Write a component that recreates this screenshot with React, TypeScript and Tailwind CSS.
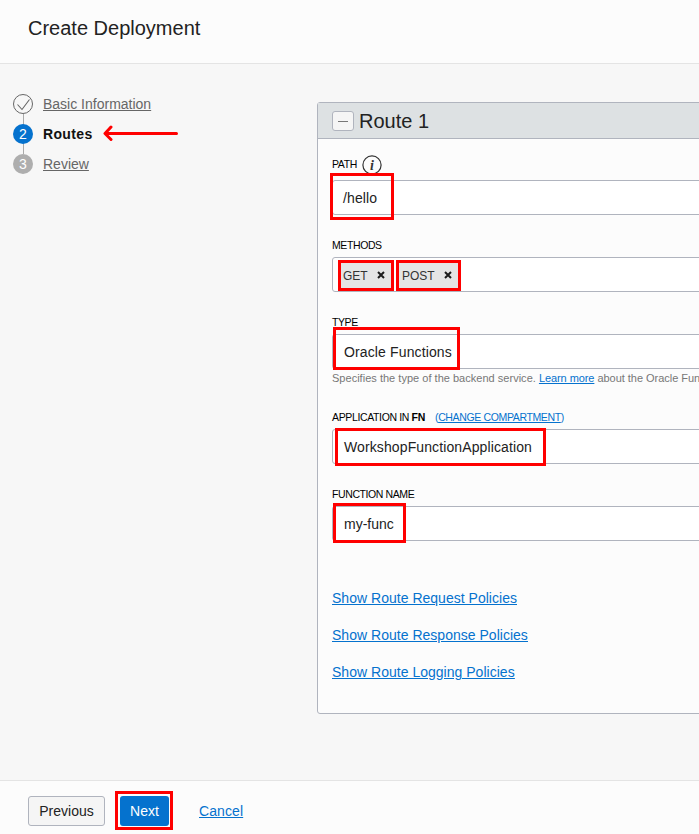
import React from "react";

function Highlight({ className }: { className: string }) {
  return <div className={`pointer-events-none absolute z-10 border-[3px] border-[#ff0000] ${className}`} />;
}

function Label({ children, className = "tracking-[-0.4px]" }: { children: React.ReactNode; className?: string }) {
  return <div className={`flex h-5 items-center whitespace-pre text-[10.5px] leading-5 text-black ${className}`}>{children}</div>;
}

function Field({ children, className = "" }: { children?: React.ReactNode; className?: string }) {
  return (
    <div className={`relative flex h-[35px] w-[500px] items-center rounded-[3px] border border-[#b0b4be] bg-white pt-[2px] text-[14px] text-[#222] ${className}`}>
      {children}
    </div>
  );
}

function Tag({ children, className }: { children: string; className: string }) {
  return (
    <div className={`relative flex h-[31px] items-center justify-between bg-[#e5e5e5] pr-[9px] text-[12px] text-[#333] ${className}`}>
      <span>{children}</span>
      <svg width="8" height="8" viewBox="0 0 8 8" className="relative -top-px text-[#1c1c1c]">
        <path d="M1 1l6 6M7 1L1 7" stroke="currentColor" strokeWidth="2" />
      </svg>
      <Highlight className="inset-0" />
    </div>
  );
}

export default function App() {
  return (
    <div className="flex h-[834px] w-[699px] flex-col overflow-hidden bg-[#f7f7f7] font-['Liberation_Sans',Arial,sans-serif]">
      <header className="h-16 shrink-0 border-b border-[#e4e4e4] bg-[#fcfcfc] pl-7 pt-[14px]">
        <h1 className="text-[20px] leading-7 text-[#222]">Create Deployment</h1>
      </header>

      <main className="flex h-[716px] shrink-0">
        <nav className="w-[317px] shrink-0 pl-[13px] pt-[25px] text-[14px] text-[#666]">
          <div className="flex h-[30px] items-center gap-[10px]">
            <svg width="20" height="20" viewBox="0 0 20 20" fill="none" stroke="#666" className="shrink-0">
              <circle cx="10" cy="10" r="9.5" />
              <path d="M4.500 10.500l4.500 5L16.500 5.500" strokeWidth="1.1" />
            </svg>
            <a className="underline">Basic Information</a>
          </div>
          <div className="relative flex h-[30px] items-center gap-[10px]">
            <span className="absolute left-[10px] top-[-5px] h-10 w-px bg-[#aaa]" />
            <span className="relative flex size-5 items-center justify-center rounded-full bg-[#0572ce] text-white">2</span>
            <span className="w-[50px] font-bold tracking-[0.35px] text-[#111]">Routes</span>
            <svg width="76" height="18" viewBox="0 0 76 18" fill="none" stroke="#ff0000" strokeWidth="3" strokeLinecap="round" strokeLinejoin="round">
              <path d="M2.500 8.500H73.500M8 2L2 8.500l6 6" />
            </svg>
          </div>
          <div className="flex h-[30px] items-center gap-[10px]">
            <span className="relative flex size-5 items-center justify-center rounded-full bg-[#aeaeae] text-white">3</span>
            <a className="underline">Review</a>
          </div>
        </nav>

        <section className="mt-[38px] h-[612px] w-[530px] shrink-0 rounded-[3px] border border-[#b0b4be] bg-[#fcfcfc]">
          <div className="flex h-9 items-center gap-[5px] border-b border-[#b0b4be] bg-[#dde1e3] pl-[14px]">
            <span className="flex h-5 w-[22px] items-center justify-center rounded-[3px] border border-[#b0b4be] bg-[#f5f5f5]">
              <span className="mt-px h-px w-[10px] bg-[#777]" />
            </span>
            <h2 className="text-[20px] leading-7 text-[#222]">Route 1</h2>
          </div>

          <div className="pl-[14px] pt-[15px]">
            <Label>
              <span className="w-[30px]">PATH</span>
              <svg width="20" height="20" viewBox="0 0 20 20" className="relative top-px">
                <circle cx="10" cy="10" r="9.100" fill="none" stroke="#333" strokeWidth="1.2" />
                <text x="10" y="14.500" textAnchor="middle" fill="#333" className="font-['Liberation_Serif',serif] text-[14px] font-bold italic tracking-normal">i</text>
              </svg>
            </Label>
            <Field className="mt-[6px] pl-[10px] tracking-[0.1px]">
              /hello
              <Highlight className="left-[-3px] top-[-8px] h-[47px] w-16" />
            </Field>

            <div className="mt-5">
              <Label>METHODS</Label>
              <Field className="mt-[2px] gap-[2px] pl-[5px]">
                <Tag className="w-14 pl-[5px]">GET</Tag>
                <Tag className="w-[65px] pl-[6px]">POST</Tag>
              </Field>
            </div>

            <div className="mt-5">
              <Label>TYPE</Label>
              <Field className="mt-[2px] pl-[11px] tracking-[0.13px]">
                Oracle Functions
                <Highlight className="left-0 top-[-8px] h-[43px] w-[127px]" />
              </Field>
              <p className="h-[18px] whitespace-nowrap text-[11px] leading-[18px] text-[#777]">
                <span className="tracking-[0.02px]">Specifies the type of the backend service. </span>
                <a className="tracking-[-0.08px] text-[#0572ce] underline">Learn more</a>
                <span className="tracking-[-0.03px]"> about the Oracle Fun</span>
              </p>
            </div>

            <div className="mt-5">
              <Label className="tracking-[-0.36px]">
                <span className="w-[103px]">APPLICATION IN <b>FN</b></span>
                <span className="text-[#0572ce]">(<a className="underline">CHANGE COMPARTMENT</a>)</span>
              </Label>
              <Field className="mt-[2px] pl-[11px] tracking-[0.11px]">
                WorkshopFunctionApplication
                <Highlight className="left-[2px] top-[-2px] h-[38px] w-[211px]" />
              </Field>
            </div>

            <div className="mt-5">
              <Label>FUNCTION NAME</Label>
              <Field className="mt-[2px] pl-[11px]">
                my-func
                <Highlight className="left-0 top-[-4px] h-10 w-[73px]" />
              </Field>
            </div>

            <div className="mt-[39px] flex flex-col text-[14px] leading-[37px] tracking-[0.02px] text-[#0572ce] underline">
              <a>Show Route Request Policies</a>
              <a>Show Route Response Policies</a>
              <a>Show Route Logging Policies</a>
            </div>
          </div>
        </section>
      </main>

      <footer className="flex h-[54px] shrink-0 items-start border-t border-[#e4e4e4] bg-[#fcfcfc] pl-7 pt-[15px] text-[14px]">
        <button className="h-[30px] w-[77px] rounded-[3px] border border-[#b0b4be] bg-[#f5f5f5] pt-px text-[#222]">Previous</button>
        <div className="relative ml-[15px] h-[30px] w-[49px]">
          <button className="h-[30px] w-[49px] rounded-[3px] bg-[#0572ce] pt-px text-white">Next</button>
          <Highlight className="left-[-5px] top-[-5px] h-[39px] w-[58px]" />
        </div>
        <a className="ml-[30px] leading-[30px] tracking-[0.1px] text-[#0572ce] underline">Cancel</a>
      </footer>
    </div>
  );
}
